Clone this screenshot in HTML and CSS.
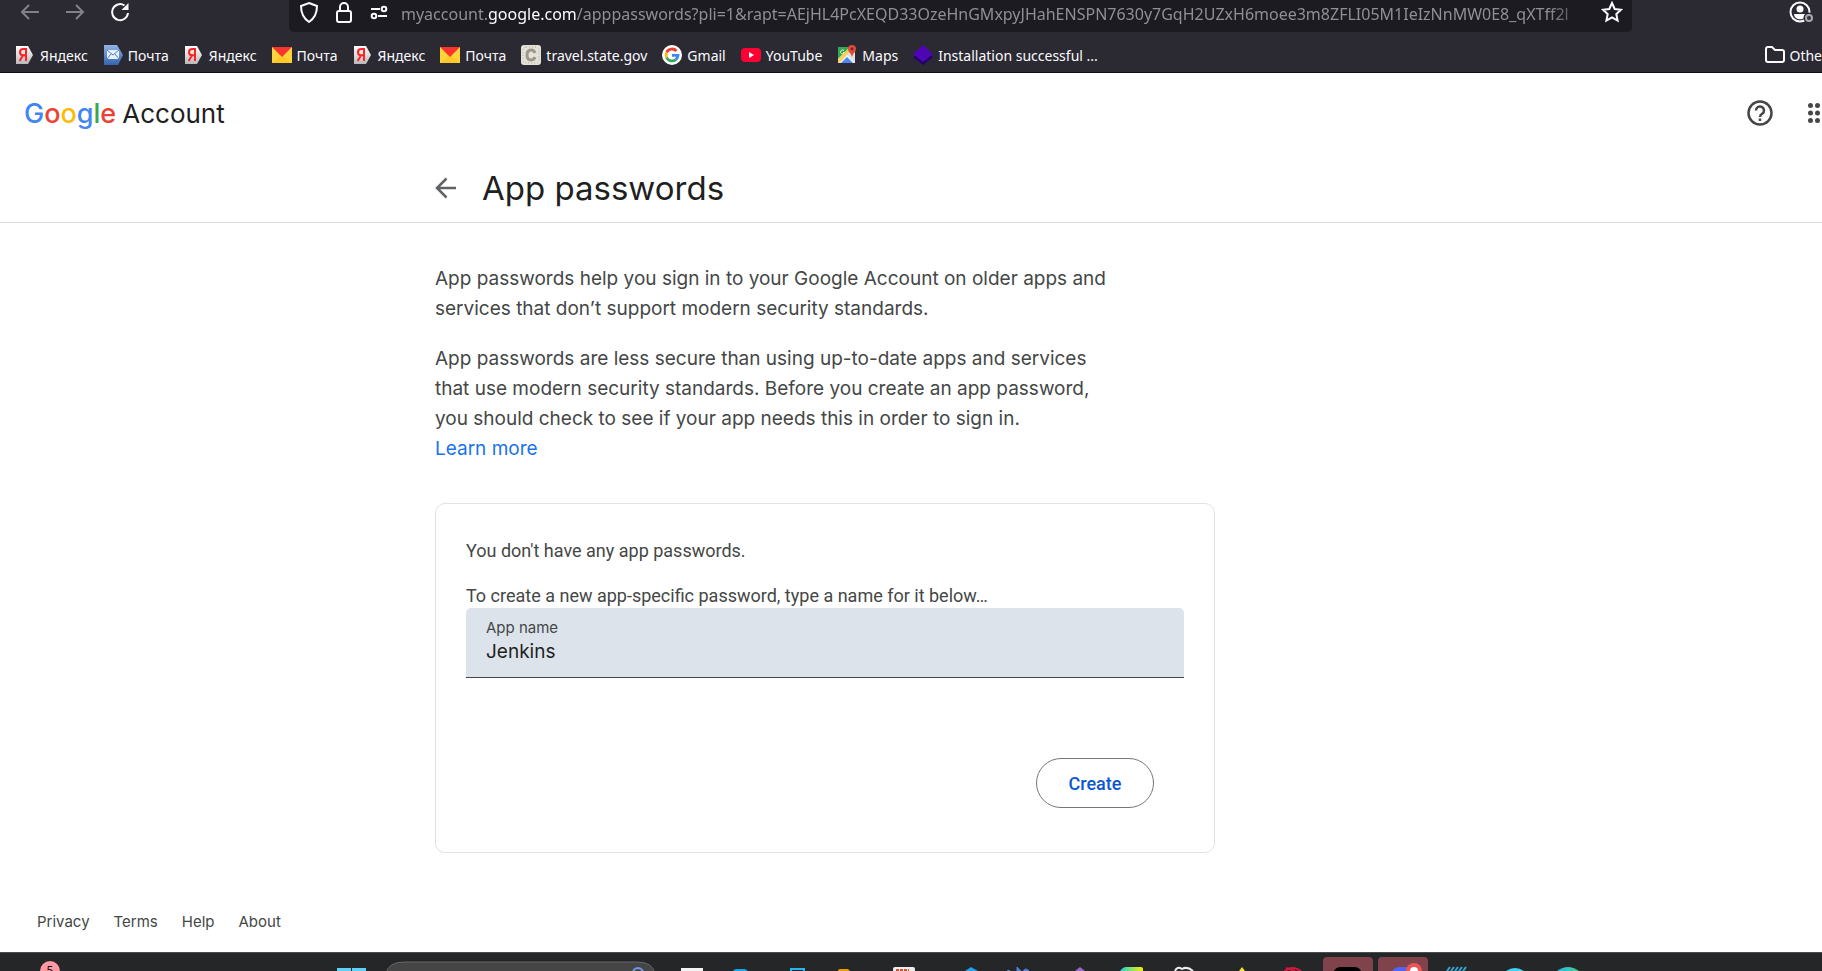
FILE: index.html
```html
<!DOCTYPE html>
<html lang="en">
<head>
<meta charset="utf-8">
<title>App passwords</title>
<link rel="stylesheet" href="styles.css">
</head>
<body>
<svg class="defs" aria-hidden="true">
  <defs>
    <linearGradient id="silver" x1="0" y1="0" x2="0" y2="1"><stop offset="0" stop-color="#fff"/><stop offset="1" stop-color="#b9b9b9"/></linearGradient>
    <linearGradient id="blue" x1="0" y1="0" x2="0" y2="1"><stop offset="0" stop-color="#8fb4e6"/><stop offset="1" stop-color="#3565ad"/></linearGradient>
    <linearGradient id="rainbow"><stop offset="0" stop-color="#1fd0dc"/><stop offset=".5" stop-color="#8be070"/><stop offset="1" stop-color="#fbee00"/></linearGradient>
    <linearGradient id="edge"><stop offset="0" stop-color="#2cb5ef"/><stop offset="1" stop-color="#45cf8b"/></linearGradient>
    <symbol id="ya" viewBox="0 0 20 20"><path d="M1 1h12l5 9-5 9H1z" fill="url(#silver)"/><path d="M11 16V4H8.500Q5 4 5 7.200 5 10 8 10.300H11M8 10.300L4.700 16" fill="none" stroke="#f22" stroke-width="2"/></symbol>
    <symbol id="mail" viewBox="0 0 20 20"><path d="M0 2h20v16H0z" fill="#ffd43a"/><path d="M0 18l10-8 10 8z" fill="#ffc828"/><path d="M0 2h20L10 12z" fill="#f9332f"/></symbol>
  </defs>
</svg>
<div class="screen">
  <header class="browser">
    <div class="toolbar">
      <div class="nav">
        <button class="tool dim" aria-label="Back"><svg width="20" height="20" viewBox="0 0 20 20"><path d="M19 10H2M9 3L2 10l7 7"/></svg></button>
        <button class="tool dim" aria-label="Forward"><svg width="20" height="20" viewBox="0 0 20 20"><path d="M1 10h17M11 3l7 7-7 7"/></svg></button>
        <button class="tool" aria-label="Reload"><svg width="20" height="20" viewBox="0 0 20 20"><path d="M14.500 3.500A8 8 0 1 0 18 11"/><path d="M18.500 1v7h-7z" fill="#fbfbfe" stroke="none"/></svg></button>
      </div>
      <div class="address">
        <svg width="20" height="22" viewBox="0 0 20 22"><path d="M10 2l8 3c0 7-2 12-8 16C4 17 2 12 2 5z"/></svg>
        <svg width="20" height="22" viewBox="0 0 20 22"><rect x="3" y="10" width="14" height="11" rx="2"/><path d="M6 10V6a4 4 0 0 1 8 0v4"/></svg>
        <svg width="20" height="22" viewBox="0 0 20 22"><path d="M2 8h9M9 15h9"/><circle cx="15" cy="8" r="2.300"/><circle cx="5" cy="15" r="2.300"/></svg>
        <span class="url">myaccount.<b>google.com</b>/apppasswords?pli=1&amp;rapt=AEjHL4PcXEQD33OzeHnGMxpyJHahENSPN7630y7GqH2UZxH6moee3m8ZFLI05M1IeIzNnMW0E8_qXTff2l</span>
        <button class="tool" aria-label="Bookmark"><svg width="22" height="22" viewBox="0 0 22 22"><path d="M11 2l2.700 6 6.300.7-4.700 4.300 1.300 6.500L11 16.300 5.400 19.500 6.700 13 2 8.700 8.300 8z"/></svg></button>
      </div>
      <button class="tool account" aria-label="Account"><svg width="24" height="24" viewBox="0 0 24 24"><circle cx="11" cy="12" r="9.500"/><circle cx="11" cy="9" r="3.500" fill="#fbfbfe" stroke="none"/><path d="M5 14h12c0 7-12 7-12 0z" fill="#fbfbfe" stroke="none"/><circle cx="20" cy="18" r="3" stroke="#2b2a33" stroke-width="5"/><circle class="dot" cx="20" cy="18" r="3"/></svg></button>
    </div>
    <nav class="bookmarks">
      <a href="#"><svg width="20" height="20"><use href="#ya"/></svg>Яндекс</a>
      <a href="#"><svg width="20" height="20" viewBox="0 0 20 20"><path d="M1 0h13l6 10-5 10H1z" fill="url(#blue)"/><path d="M4 5h12v9H4z" fill="#e8f0fc"/><path d="M4 5l6 5 6-5M4 14l4-5M16 14l-4-5" fill="none" stroke="#5080c4" stroke-width="1"/></svg>Почта</a>
      <a href="#"><svg width="20" height="20"><use href="#ya"/></svg>Яндекс</a>
      <a href="#"><svg width="20" height="20"><use href="#mail"/></svg>Почта</a>
      <a href="#"><svg width="20" height="20"><use href="#ya"/></svg>Яндекс</a>
      <a href="#"><svg width="20" height="20"><use href="#mail"/></svg>Почта</a>
      <a href="#"><svg width="20" height="20" viewBox="0 0 20 20"><rect width="20" height="20" rx="3" fill="#e6e2d8"/><rect x="2" y="2" width="16" height="16" rx="3" fill="none" stroke="#aaa69c" stroke-dasharray="1 2"/><path d="M14 8Q13 5 10 5 6 5 6 10t4 5q3 0 4-3" fill="none" stroke="#9b988f" stroke-width="3"/></svg>travel.state.gov</a>
      <a href="#"><svg width="20" height="20" viewBox="0 0 20 20"><circle cx="10" cy="10" r="10" fill="#fff"/><g fill="none" stroke-width="2.800"><path d="M14.500 6A6 6 0 0 0 4.600 7.500" stroke="#ea4335"/><path d="M4.600 7.500a6 6 0 0 0 0 5" stroke="#fbbc05"/><path d="M4.600 12.500a6 6 0 0 0 9.200 2.100" stroke="#34a853"/><path d="M13.800 14.600A6 6 0 0 0 16 10.300h-6" stroke="#4285f4"/></g></svg>Gmail</a>
      <a href="#"><svg width="20" height="20" viewBox="0 0 20 20"><rect y="3" width="20" height="14" rx="4" fill="#ff0033"/><path d="M8 7l5 3-5 3z" fill="#fff"/></svg>YouTube</a>
      <a href="#"><svg width="20" height="20" viewBox="0 0 20 20"><path d="M1 2h17v16H1z" fill="#dfe3e8"/><path d="M1 2h12L1 14z" fill="#34a853"/><path d="M7 5.500a2 2 0 1 0 .5 2H6" fill="none" stroke="#d8f0de"/><path d="M1 14L13 2l2 3L2 18H1z" fill="#fbd05a"/><path d="M10 10l8 8H3z" fill="#eef1f5"/><path d="M10 12l6 6H4z" fill="#4a88ee"/><path d="M15 12C14 8 11 7 11 4a4 4 0 0 1 8 0c0 3-3 4-4 8z" fill="#dd4b3e"/><circle cx="15" cy="4" r="1.400" fill="#7b2018"/></svg>Maps</a>
      <a href="#"><svg width="20" height="20" viewBox="0 0 20 20"><path d="M0 12l10 8 10-8-10-6z" fill="#23006b"/><path d="M0 9l10-9 10 9-10 8z" fill="#4d05b5"/></svg>Installation successful ...</a>
      <a href="#" class="other"><svg class="line" width="20" height="20" viewBox="0 0 20 20"><path d="M1 4q0-2 2-2h4l3 3h7q2 0 2 2v8q0 2-2 2H3q-2 0-2-2z"/></svg>Othe</a>
    </nav>
  </header>

  <main class="page">
    <div class="brandbar">
      <div class="brand"><span class="logo"><i class="b">G</i><i class="r">o</i><i class="y">o</i><i class="b">g</i><i class="g">l</i><i class="r">e</i></span><span>Account</span></div>
      <div class="actions">
        <button aria-label="Help"><svg width="28" height="28" viewBox="0 0 28 28" fill="none" stroke="#444746" stroke-width="2.500"><circle cx="14" cy="14" r="11.500"/><path d="M10 11.500a4 4 0 1 1 6.300 3.200Q14 16 14 18"/><path d="M14 19.500v2.500"/></svg></button>
        <button class="apps" aria-label="Google apps"><svg width="20" height="20" viewBox="0 0 20 20" fill="#444746"><g id="dots"><circle cx="2.500" cy="2.500" r="2.500"/><circle cx="2.500" cy="10" r="2.500"/><circle cx="2.500" cy="17.500" r="2.500"/></g><use href="#dots" x="7"/><use href="#dots" x="14"/></svg></button>
      </div>
    </div>
    <div class="titlebar"><div class="title">
      <button aria-label="Back"><svg width="22" height="22" viewBox="0 0 22 22" fill="none" stroke="#5f6368" stroke-width="2.500"><path d="M21 11H3M11.500 1.500L2 11l9.500 9.500"/></svg></button>
      <h1>App passwords</h1>
    </div></div>
    <div class="content">
      <div class="intro">
        <p>App passwords help you sign in to your Google Account on older apps and<br>services that don’t support modern security standards.</p>
        <p>App passwords are less secure than using up-to-date apps and services<br>that use modern security standards. Before you create an app password,<br>you should check to see if your app needs this in order to sign in.<br><a href="#">Learn more</a></p>
      </div>
      <section class="card">
        <p>You don't have any app passwords.</p>
        <p>To create a new app-specific password, type a name for it below…</p>
        <div class="field"><label for="name">App name</label><input id="name" type="text" value="Jenkins"></div>
        <button class="create">Create</button>
      </section>
    </div>
    <footer class="foot"><a href="#">Privacy</a><a href="#">Terms</a><a href="#">Help</a><a href="#">About</a></footer>
  </main>

  <div class="taskbar">
    <span class="badge">5</span>
    <svg width="1822" height="19" viewBox="0 1 1822 19">
      <path d="M337 16h14v3h-14zM352 16h14v3h-14z" fill="#5fd0f8"/>
      <path d="M386 24V22q2-12 18-12h233q16 0 18 12v2z" fill="#454545" stroke="#686868"/>
      <circle cx="638" cy="21" r="5" fill="none" stroke="#6f96e8" stroke-width="2"/>
      <path d="M681 16h22v3h-22z" fill="#f3f3f3"/>
      <path d="M733 19q1-2 4-2h8l3 2z" fill="#1ba4f4"/>
      <path d="M791 22v-5h13v5" fill="none" stroke="#22b8ef" stroke-width="2"/>
      <path d="M838 19q0-2 2-2h8l2 2z" fill="#e6a100"/>
      <path d="M893 19v-2q0-2 2-2h18q2 0 2 2v2z" fill="#eee"/><path d="M896 18h13" stroke="#d6512e" stroke-width="2" stroke-dasharray="3 1"/>
      <path d="M965 19l6-4 7 4z" fill="#22a2ec"/>
      <path d="M1007 19h3l-1-1zM1017 15l4 4h-4zM1023 19q3-4 6 0z" fill="#4d83d8" stroke="#4d83d8"/>
      <path d="M1075 19l5-4 5 4z" fill="#9a68c9"/>
      <path d="M1120 19q3-4 6-4h15q2 0 2 2v2z" fill="url(#rainbow)"/>
      <path d="M1175 19q2-5 7-2 5-3 11 2" fill="none" stroke="#eee" stroke-width="2"/>
      <path d="M1239 19l3-4 3 4z" fill="#f5e52b"/>
      <path d="M1284 20q8-8 18 0M1286 16l9 3" fill="none" stroke="#d5173e" stroke-width="2"/>
      <path d="M1323 20V9q0-4 4-4h42q4 0 4 4v11zM1378 20V9q0-4 4-4h42q4 0 4 4v11z" fill="#81434b"/>
      <path d="M1334 19q2-4 7-4h13q5 0 7 4z" fill="#000"/>
      <path d="M1392 19q3-4 8-4h8v4z" fill="#5065f2"/><circle cx="1414" cy="19" r="8" fill="#ed5454"/><path d="M1410 19q0-4 4-4t4 4z" fill="#fff"/>
      <path d="M1447 19l3-4M1451 19l3-4M1455 19l3-4M1459 19l3-4M1463 19l3-4" stroke="#37a5cf" stroke-width="2"/>
      <path d="M1506 19q9-6 18 0z" fill="#42d4f2"/>
      <path d="M1557 19q11-8 22 0z" fill="url(#edge)"/>
    </svg>
  </div>
</div>
</body>
</html>
```
FILE: styles.css
```css
* { box-sizing: border-box; }
body { margin: 0; font-family: Inter, Roboto, sans-serif; background: #fff; }
button { border: 0; background: none; padding: 0; font: inherit; cursor: pointer; }
a { text-decoration: none; color: inherit; }
svg { display: block; flex: none; }
p, h1 { margin: 0; }
.defs { position: absolute; width: 0; height: 0; }
.screen { display: flex; flex-direction: column; height: 100vh; overflow: hidden; }

.browser { flex: none; background: #2b2a33; color: #fbfbfe; border-bottom: 1px solid #0d0d12; overflow: hidden; font-family: "Noto Sans", sans-serif; }
.toolbar { display: flex; align-items: flex-start; height: 32px; }
.tool svg, .address svg, .line { fill: none; stroke: #fbfbfe; stroke-width: 2; }
.tool.dim svg { stroke: #82818a; }
.tool .dot { stroke: #a9a8ae; }
.nav { display: flex; gap: 25px; width: 289px; padding: 2px 0 0 20px; }
.address { flex: 1; min-width: 0; display: flex; align-items: center; gap: 15px; height: 32px; padding: 0 9px 8px 10px; background: #1c1b22; border-radius: 0 0 5px 5px; }
.url { flex: 1; min-width: 0; overflow: hidden; white-space: nowrap; font-size: 16px; line-height: 24px; color: #8f8f95; margin: 0 -10px 0 -3px; padding-top: 4px; mask-image: linear-gradient(to right, #000 96%, transparent); }
.url b { font-weight: 400; color: #fbfbfe; }
.account { width: 190px; padding-left: 157px; }
.bookmarks { display: flex; align-items: center; height: 40px; gap: 15px; padding: 6px 0 0 15px; font-size: 14px; white-space: nowrap; }
.bookmarks a { display: flex; align-items: center; gap: 5px; height: 24px; }
.bookmarks .other { margin-left: auto; gap: 4px; }

.page { flex: 1; min-height: 0; display: flex; flex-direction: column; color: #444746; }
.brandbar { display: flex; align-items: center; justify-content: space-between; height: 80px; padding-left: 24px; }
.brand { display: flex; align-items: baseline; gap: 6px; font-size: 26px; color: #1f1f1f; }
.logo { font-size: 27px; }
.logo i { font-style: normal; font-weight: 500; }
.b { color: #4285f4; } .r { color: #ea4335; } .y { color: #fbbc05; } .g { color: #34a853; }
.actions { display: flex; align-items: center; gap: 34px; overflow: hidden; }
.apps { width: 14px; }
.titlebar { border-bottom: 1px solid #dadce0; }
.title { display: flex; align-items: center; gap: 25px; height: 69px; }
.title, .content { width: 780px; margin-left: 435px; }
h1 { font-size: 33px; line-height: 44px; font-weight: 400; color: #1f1f1f; }
.intro { display: flex; flex-direction: column; gap: 20px; padding-top: 41px; font-size: 19px; line-height: 30px; white-space: nowrap; }
.intro a { color: #1a73e8; }
.card { display: flex; flex-direction: column; margin-top: 39px; padding: 35px 30px 44px; border: 1px solid #e0e2e4; border-radius: 10px; font-family: Roboto, sans-serif; font-size: 18px; line-height: 24px; }
.card p + p { margin-top: 21px; }
.field { display: flex; flex-direction: column; height: 70px; padding: 8px 20px; background: #dde3ea; border-bottom: 1px solid #444746; border-radius: 5px 5px 0 0; }
.field label { font: 15px/24px Inter, sans-serif; }
.field input { border: 0; padding: 0; background: none; outline: 0; font: 19px/24px Inter, sans-serif; color: #1f1f1f; }
.create { align-self: flex-end; width: 118px; height: 50px; margin: 80px 30px 0 0; border: 1px solid #747775; border-radius: 25px; color: #0b57d0; font: 500 18px Roboto, sans-serif; }
.foot { display: flex; gap: 24px; margin-top: auto; padding: 0 37px 20px; font-size: 15px; line-height: 20px; }

.taskbar { position: relative; flex: none; height: 19px; background: #242628; border-top: 1px solid #4a4c4e; overflow: hidden; }
.badge { position: absolute; left: 40px; top: 8px; width: 20px; height: 20px; border-radius: 50%; background: #ff99a4; color: #111; font: 12px/20px "Noto Sans", sans-serif; text-align: center; }
```
